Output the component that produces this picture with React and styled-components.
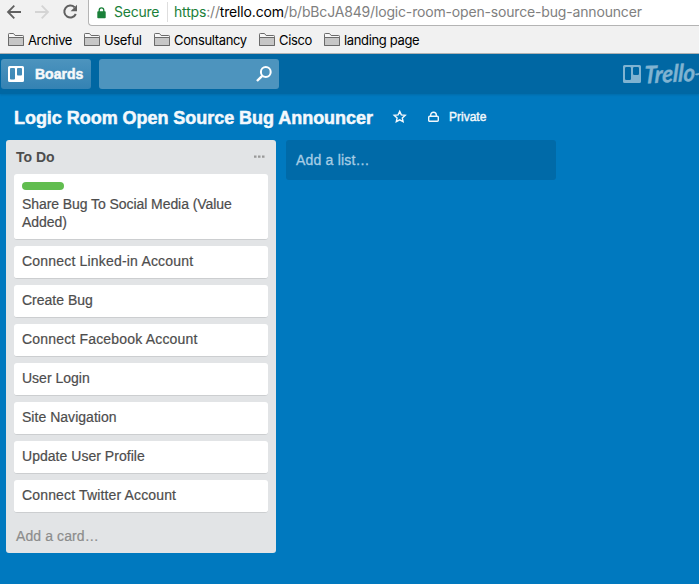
import React from 'react';
import styled, { createGlobalStyle } from 'styled-components';

const GlobalStyle = createGlobalStyle`
  * { box-sizing: border-box; }
  html, body { margin: 0; padding: 0; overflow: hidden; }
  body { background: #0079bf; }
`;

const Page = styled.div`
  width: 100%;
  height: 584px;
  overflow: hidden;
  background: #0079bf;
  display: flex;
  flex-direction: column;
  font-family: "Liberation Sans", Arial, sans-serif;
  white-space: nowrap;
`;

const Toolbar = styled.div`
  height: 26px;
  flex: none;
  display: flex;
  background: #f1f1f1;
  font-family: Inter, Roboto, sans-serif;
`;

const NavButtons = styled.div`
  width: 88px;
  flex: none;
  display: flex;
  padding: 3px 0 0 5px;
  gap: 10px;
`;

const AddressBar = styled.div`
  flex: 1;
  height: 26px;
  display: flex;
  align-items: center;
  background: #fff;
  border-left: 1px solid #b4b4b4;
  border-bottom: 1px solid #b4b4b4;
  border-bottom-left-radius: 4px;
  padding-left: 8px;
  font-size: 14px;
  line-height: 24px;
`;

const Secure = styled.span`
  width: 53px;
  margin-left: 8px;
  padding-bottom: 1px;
  color: #1a8039;
  letter-spacing: -0.25px;
`;

const Divider = styled.span`
  width: 1px;
  height: 20px;
  margin-bottom: 2px;
  background: #dedede;
`;

const Url = styled.span`
  margin-left: 6px;
  padding-bottom: 1px;
  color: #808080;
  letter-spacing: -0.17px;
`;

const UrlPart = styled.span`
  color: ${p => (p.$scheme ? '#1a8039' : '#000')};
`;

const BookmarkBar = styled.div`
  height: 28px;
  flex: none;
  display: flex;
  align-items: center;
  padding: 0 0 0 8px;
  gap: 12px;
  background: #f1f1f1;
  border-bottom: 1px solid #b4b4b4;
  font: 13px/20px Inter, Roboto, sans-serif;
  letter-spacing: -0.35px;
  color: #000;
`;

const Bookmark = styled.div`
  width: ${p => p.$w}px;
  display: flex;
  align-items: center;
  gap: 4px;
`;

const Header = styled.header`
  height: 40px;
  flex: none;
  display: flex;
  align-items: flex-start;
  padding: 5px 0 0 1px;
  background: #0067a3;
  box-shadow: 0 1px 2px rgba(0, 90, 145, 0.45);
`;

const BoardsButton = styled.div`
  width: 90px;
  height: 30px;
  display: flex;
  align-items: center;
  padding-left: 7px;
  gap: 11px;
  border-radius: 3px;
  background: linear-gradient(#4d94be, #3482b3);
  color: #f6f8fa;
  font-weight: 700;
  font-size: 14px;
  -webkit-text-stroke: 0.5px;
`;

const Search = styled.div`
  width: 180px;
  height: 30px;
  margin-left: 8px;
  display: flex;
  align-items: center;
  justify-content: flex-end;
  padding-right: 7px;
  border-radius: 3px;
  background: #4d94be;
`;

const Brand = styled.div`
  margin-left: auto;
  width: 76px;
  height: 30px;
  flex: none;
  color: #80b3d1;
`;

const BoardHeader = styled.div`
  height: 46px;
  flex: none;
  display: flex;
  align-items: center;
  padding-left: 14px;
  color: #f3f8fc;
`;

const BoardTitle = styled.h1`
  width: 379px;
  margin: 0;
  padding-top: 1px;
  font-size: 18px;
  line-height: 24px;
  letter-spacing: -0.04px;
  -webkit-text-stroke: 0.5px;
`;

const Visibility = styled.div`
  display: flex;
  align-items: center;
  margin-left: 21px;
  gap: 10px;
  font-size: 12px;
  line-height: 18px;
  -webkit-text-stroke: 0.4px;
`;

const Lists = styled.main`
  display: flex;
  align-items: flex-start;
  padding-left: 6px;
  gap: 10px;
`;

const List = styled.section`
  width: 270px;
  height: 413px;
  padding: 0 8px;
  border-radius: 3px;
  background: #e2e4e6;
`;

const ListHeader = styled.div`
  height: 34px;
  display: flex;
  justify-content: space-between;
  padding: 8px 3px 0 2px;
  color: #4d4d4d;
`;

const ListTitle = styled.h2`
  margin: 0;
  font-size: 14px;
  line-height: 18px;
`;

const Card = styled.article`
  min-height: 33px;
  margin-bottom: 6px;
  padding: ${p => (p.$labelled ? '8px 8px' : '6px 8px 7px')};
  border-radius: 3px;
  border-bottom: 1px solid #ccced0;
  background: #fff;
  color: #4d4d4d;
  font-size: 14px;
  line-height: 18px;
  letter-spacing: ${p => p.$track ?? 0}px;
  -webkit-text-stroke: 0.2px;
  white-space: normal;
`;

const Label = styled.div`
  width: 42px;
  height: 8px;
  margin-bottom: 5px;
  border-radius: 4px;
  background: #61bd4f;
`;

const AddCard = styled.div`
  padding: 8px 2px 0;
  color: #8c8c8c;
  font-size: 14px;
  line-height: 18px;
  letter-spacing: 0.1px;
  -webkit-text-stroke: 0.2px;
`;

const AddList = styled.div`
  width: 270px;
  height: 40px;
  padding: 0 10px;
  border-radius: 3px;
  background: #006aa8;
  color: #a6cde5;
  font-size: 14px;
  line-height: 40px;
  letter-spacing: 0.2px;
  -webkit-text-stroke: 0.3px;
`;

const Icon = styled.svg`
  display: block;
  flex: none;
  overflow: visible;
`;

const Folder = () => (
  <Icon width="16" height="13" viewBox="0 0 16 13" fill="none" stroke="#6a6a6a">
    <path d="M.5 12.5V1.3q0-.8.8-.8h4.2l1.6 2h7.6q.8 0 .8.8v9.2z" fill="#f7f7f7" />
    <path d="M.5 12.5v-8h15v8z" fill="#c6c6c6" />
  </Icon>
);

const bookmarks = [
  ['Archive', 64],
  ['Useful', 58],
  ['Consultancy', 93],
  ['Cisco', 53],
  ['landing page', 96],
];

const cards = [
  ['Connect Linked-in Account', 0.19],
  ['Create Bug', 0],
  ['Connect Facebook Account', 0.18],
  ['User Login', 0],
  ['Site Navigation', 0.03],
  ['Update User Profile', 0.03],
  ['Connect Twitter Account', 0.15],
];

export default function App() {
  return (
    <Page>
      <GlobalStyle />
      <Toolbar>
        <NavButtons>
          <Icon width="18" height="18" viewBox="0 0 18 18" fill="none" stroke="#606060" strokeWidth="1.8">
            <path d="M9.3 2.7 3 9l6.3 6.3M3 9h13" />
          </Icon>
          <Icon width="18" height="18" viewBox="0 0 18 18" fill="none" stroke="#d4d4d4" strokeWidth="1.8">
            <path d="m8.7 2.7 6.3 6.3-6.3 6.3M15 9H2" />
          </Icon>
          <Icon width="18" height="18" viewBox="0 0 18 18" fill="none" stroke="#606060" strokeWidth="2">
            <path d="M13.6 4.3A6 6 0 1 0 14.8 11" />
            <path d="M16 1.8v6.4H9.6z" fill="#606060" stroke="none" />
          </Icon>
        </NavButtons>
        <AddressBar>
          <Icon width="9" height="12" viewBox="0 0 9 12">
            <path d="M2.2 5V3.2a2.3 2.3 0 0 1 4.6 0V5" fill="none" stroke="#1a8039" strokeWidth="1.3" />
            <rect x=".3" y="4.3" width="8.4" height="7" rx=".8" fill="#1a8039" />
          </Icon>
          <Secure>Secure</Secure>
          <Divider />
          <Url>
            <UrlPart $scheme>https</UrlPart>://<UrlPart>trello.com</UrlPart>/b/bBcJA849/logic-room-open-source-bug-announcer
          </Url>
        </AddressBar>
      </Toolbar>
      <BookmarkBar>
        {bookmarks.map(([name, w]) => (
          <Bookmark key={name} $w={w}>
            <Folder />
            {name}
          </Bookmark>
        ))}
      </BookmarkBar>
      <Header>
        <BoardsButton>
          <Icon width="16" height="16" viewBox="0 0 16 16">
            <path
              fill="#fff"
              fillRule="evenodd"
              d="M1.5 0h13Q16 0 16 1.5v13q0 1.5-1.5 1.5h-13Q0 16 0 14.5v-13Q0 0 1.5 0zM3 2q-1 0-1 1v9.5q0 1 1 1h3q1 0 1-1V3q0-1-1-1zM10 2q-1 0-1 1v5.5q0 1 1 1h3q1 0 1-1V3q0-1-1-1z"
            />
          </Icon>
          Boards
        </BoardsButton>
        <Search>
          <Icon width="16" height="16" viewBox="0 0 16 16" fill="none" stroke="#fff">
            <circle cx="9.8" cy="6" r="4.9" strokeWidth="2" />
            <path d="M6.2 9.8 1 15" strokeWidth="2.4" />
          </Icon>
        </Search>
        <Brand>
          <Icon width="76" height="30" viewBox="0 0 76 30" fill="currentColor">
            <path
              fillRule="evenodd"
              d="M1.5 6h15q1.5 0 1.5 1.5v15q0 1.5-1.5 1.5h-15Q0 24 0 22.5v-15Q0 6 1.5 6zM3.2 8q-1.2 0-1.2 1.2v10.6q0 1.200 1.200 1.200h3.600q1.200 0 1.200-1.200V9.200Q8 8 6.800 8zM11.200 8Q10 8 10 9.200v5.600q0 1.200 1.200 1.200h3.600q1.200 0 1.200-1.200V9.200Q16 8 14.800 8z"
            />
            <text
              transform="translate(21 24.500) rotate(-3) skewX(-5)"
              fontFamily="Lato, sans-serif"
              fontStyle="italic"
              fontWeight="700"
              fontSize="24"
              stroke="currentColor"
              strokeWidth=".4"
              textLength="51"
              lengthAdjust="spacingAndGlyphs"
            >
              Trello
            </text>
            <path d="M72.500 15q2 1 3.500-.5" fill="none" stroke="currentColor" strokeWidth="1.800" />
          </Icon>
        </Brand>
      </Header>
      <BoardHeader>
        <BoardTitle>Logic Room Open Source Bug Announcer</BoardTitle>
        <Icon width="14" height="14" viewBox="0 0 14 14" fill="none" stroke="#f3f8fc" strokeWidth="1.4">
          <path d="m6.700 1.400 1.600 3.500 3.900.400-2.900 2.600.8 3.800-3.400-1.900-3.400 1.900.8-3.800L1.200 5.300l3.900-.400z" />
        </Icon>
        <Visibility>
          <Icon width="11" height="12" viewBox="0 0 11 12" fill="none" stroke="#f3f8fc" strokeWidth="1.4">
            <rect x=".7" y="5.200" width="9.600" height="5.100" rx="1" />
            <path d="M2.700 5V4a2.800 2.800 0 0 1 5.600 0V5" />
          </Icon>
          Private
        </Visibility>
      </BoardHeader>
      <Lists>
        <List>
          <ListHeader>
            <ListTitle>To Do</ListTitle>
            <Icon width="11" height="18" viewBox="0 0 11 18" fill="#999">
              <path d="M0 7.500h2.500v2.300H0zM4 7.500h2.500v2.300H4zM8 7.500h2.500v2.300H8z" />
            </Icon>
          </ListHeader>
          <Card $labelled $track={-0.07}>
            <Label />
            Share Bug To Social Media (Value Added)
          </Card>
          {cards.map(([name, track]) => (
            <Card key={name} $track={track}>{name}</Card>
          ))}
          <AddCard>Add a card…</AddCard>
        </List>
        <AddList>Add a list…</AddList>
      </Lists>
    </Page>
  );
}
